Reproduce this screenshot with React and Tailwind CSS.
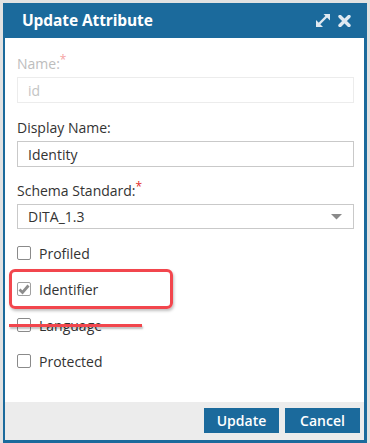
import React from "react";

function Checkbox({ checked }) {
  return (
    <div className={`w-[14px] h-[14px] rounded-[2px] border ${checked ? "border-[#a0a0a0]" : "border-[#8a8a8a]"} bg-white flex items-center justify-center`}>
      {checked ? (
        <svg width="12" height="11" viewBox="0 0 12 11">
          <path d="M1.5 5.5 L4.5 8.5 L10.5 1.5" fill="none" stroke="#8c8c8c" strokeWidth="2.8" />
        </svg>
      ) : null}
    </div>
  );
}

function CheckRow({ label, checked }) {
  return (
    <div className="h-9 flex items-center gap-[8px]">
      <Checkbox checked={checked} />
      <span className="text-[14px] text-[#333]">{label}</span>
    </div>
  );
}

export default function App() {
  return (
    <div className="w-[370px] h-[443px] overflow-hidden bg-[#e2e2e2] pt-[3px] px-[3px]" style={{ fontFamily: '"Open Sans", sans-serif' }}>
      <div className="relative h-[440px] flex flex-col bg-white border-2 border-r-[3px] border-t-0 border-b-[3px] border-[#1b6a9c]">
        {/* header */}
        <div className="h-[35px] -mx-[2px] -mr-[3px] pl-[19px] pr-[16px] bg-[#1b6a9c] flex items-center justify-between">
          <span className="text-white font-bold text-[15.5px] tracking-[-0.1px]">Update Attribute</span>
          <div className="flex items-center gap-[7px]">
            <svg width="16" height="15" viewBox="0 0 16 15">
              <path d="M4 11 L12 3" stroke="#dfe9f1" strokeWidth="2.4" />
              <path d="M8.5 1 L15 1 L15 7.5 Z" fill="#dfe9f1" />
              <path d="M1 7 L1 14 L8 14 Z" fill="#dfe9f1" />
            </svg>
            <svg width="13" height="12" viewBox="0 0 13 12">
              <path d="M2 1.5 L11 10.5 M11 1.5 L2 10.5" stroke="#dfe9f1" strokeWidth="3.4" strokeLinecap="round" />
            </svg>
          </div>
        </div>

        {/* body */}
        <div className="flex-1 pl-3 pr-[10px] pt-4">
          <div className="flex flex-col gap-[3px]">
            <label className="text-[14px] leading-5 text-[#bdbdbd]">
              Name:<sup className="text-[#f5a3a3] text-[12px] top-[-5px]">*</sup>
            </label>
            <div className="h-[26px] border border-[#ececec] px-[10px] flex items-center text-[14px] text-[#c4c4c4]">id</div>
          </div>
          <div className="flex flex-col gap-[3px] mt-[15px]">
            <label className="text-[14px] leading-5 text-[#333]">Display Name:</label>
            <div className="h-[26px] border border-[#c9c9c9] px-[10px] flex items-center text-[14px] text-[#333]">Identity</div>
          </div>
          <div className="flex flex-col gap-[3px] mt-[14px]">
            <label className="text-[14px] leading-5 text-[#333]">
              Schema Standard:<sup className="text-[#e32b2b] text-[12px] top-[-5px]">*</sup>
            </label>
            <div className="h-[25px] border border-[#c9c9c9] pl-[10px] pr-[11px] flex items-center justify-between text-[14px] text-[#333]">
              <span>DITA_1.3</span>
              <svg width="11" height="6" viewBox="0 0 11 6">
                <path d="M0 0 L11 0 L5.5 5.5 Z" fill="#8a8a8a" />
              </svg>
            </div>
          </div>
          <div className="mt-[6px] flex flex-col">
            <CheckRow label="Profiled" />
            <CheckRow label="Identifier" checked />
            <CheckRow label="Language" />
            <CheckRow label="Protected" />
          </div>
        </div>

        {/* footer */}
        <div className="h-[38px] bg-[#ececec] flex items-center justify-end gap-[6px] pr-[4px] pb-[1px]">
          <button className="w-[75px] h-[25px] bg-[#1b6a9c] text-white text-[14px] font-semibold">Update</button>
          <button className="w-[75px] h-[25px] bg-[#1b6a9c] text-white text-[14px] font-semibold">Cancel</button>
        </div>

        {/* annotations */}
        <div className="absolute left-[4px] top-[266px] w-[164px] h-[40px] rounded-[6px] border-[3px] border-[#f2464d] shadow-[1px_2px_3px_rgba(0,0,0,0.25)]" />
        <div className="absolute left-[4px] top-[321px] w-[133px] h-[2.5px] bg-[#f2464d] shadow-[1px_2px_2px_rgba(0,0,0,0.25)]" />
      </div>
    </div>
  );
}
